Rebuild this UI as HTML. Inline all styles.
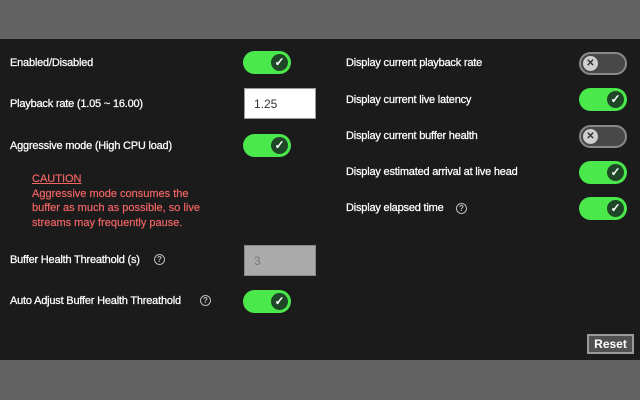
<!DOCTYPE html>
<html><head><meta charset="utf-8"><style>
*{margin:0;padding:0;box-sizing:border-box}
body{width:640px;height:400px;background:#636363;position:relative;overflow:hidden;font-family:"Liberation Sans",sans-serif;font-size:11px;color:#fff}
#p{position:absolute;left:0;top:39px;width:640px;height:321px;background:#1b1b1b}
.l{position:absolute;white-space:nowrap;line-height:14px;letter-spacing:-0.2px;-webkit-text-stroke:0.25px #fff}
.t{position:absolute;width:48px;height:23px;border-radius:12px}
.on{background:#4ae84a}
.on::after{content:"✓";position:absolute;right:3px;top:3px;width:17px;height:17px;border-radius:50%;background:#1f4626;color:#fff;font-size:12px;font-weight:bold;text-align:center;line-height:17px}
.off{background:#484848;border:2px solid #8a8a8a}
.off::after{content:"✕";position:absolute;left:2px;top:2px;width:15px;height:15px;border-radius:50%;background:#cfcfcf;color:#333;font-size:10px;font-weight:bold;text-align:center;line-height:15px}
.q{position:absolute;width:11px;height:11px;border:1.3px solid #bbb;border-radius:50%;color:#bbb;font-size:8px;text-align:center;line-height:9px;font-weight:bold}
.in{position:absolute;width:72px;height:31px;padding-left:9px;line-height:31px;font-size:12px}
.c{position:absolute;left:32px;color:#f06464;line-height:14.7px;font-size:11px;-webkit-text-stroke:0.2px #f06464}
</style></head><body>
<div id="p"></div>
<div class="l" style="left:10px;top:56px">Enabled/Disabled</div>
<div class="t on" style="left:243px;top:51px"></div>
<div class="l" style="left:10px;top:97px">Playback rate (1.05 ~ 16.00)</div>
<div class="in" style="left:244px;top:88px;background:#fff;color:#333;border:1px solid #999">1.25</div>
<div class="l" style="left:10px;top:139px">Aggressive mode (High CPU load)</div>
<div class="t on" style="left:243px;top:134px"></div>
<div class="c" style="top:172px"><u>CAUTION</u><br>Aggressive mode consumes the<br>buffer as much as possible, so live<br>streams may frequently pause.</div>
<div class="l" style="left:10px;top:253px">Buffer Health Threathold (s)</div>
<div class="q" style="left:154px;top:254px">?</div>
<div class="in" style="left:244px;top:245px;background:#aaa;color:#777;border:1px solid #888">3</div>
<div class="l" style="left:10px;top:294px">Auto Adjust Buffer Health Threathold</div>
<div class="q" style="left:200px;top:295px">?</div>
<div class="t on" style="left:243px;top:290px"></div>

<div class="l" style="left:346px;top:56px">Display current playback rate</div>
<div class="t off" style="left:579px;top:52px"></div>
<div class="l" style="left:346px;top:93px">Display current live latency</div>
<div class="t on" style="left:579px;top:88px"></div>
<div class="l" style="left:346px;top:129px">Display current buffer health</div>
<div class="t off" style="left:579px;top:125px"></div>
<div class="l" style="left:346px;top:165px">Display estimated arrival at live head</div>
<div class="t on" style="left:579px;top:161px"></div>
<div class="l" style="left:346px;top:201px">Display elapsed time</div>
<div class="q" style="left:456px;top:203px">?</div>
<div class="t on" style="left:579px;top:197px"></div>

<div style="position:absolute;left:587px;top:334px;width:47px;height:20px;background:#505050;border:2px solid #9a9a9a;color:#fff;font-size:12px;font-weight:bold;text-align:center;line-height:16px">Reset</div>
</body></html>
